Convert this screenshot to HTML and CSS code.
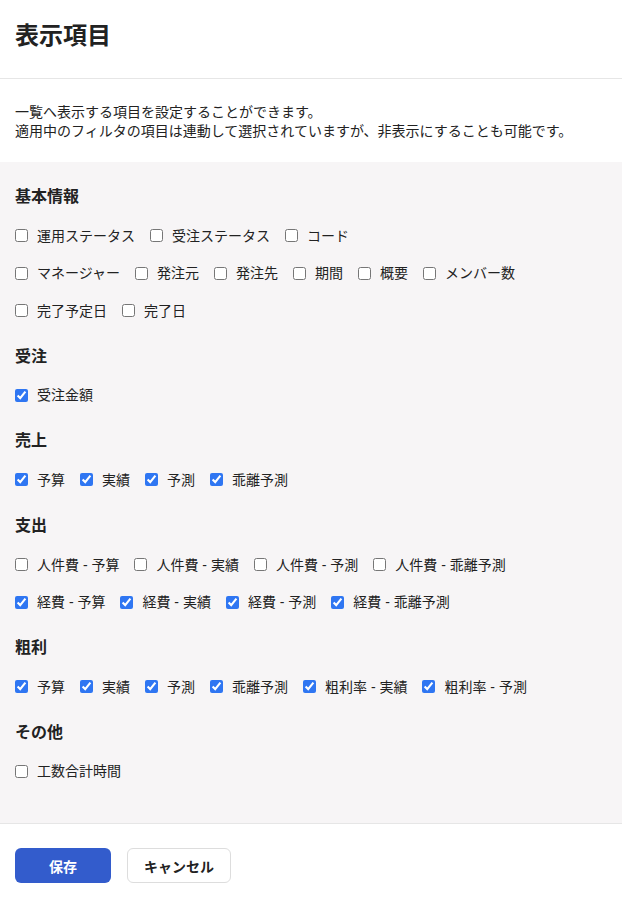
FILE: index.html
```html
<!DOCTYPE html>
<html lang="ja">
<head>
<meta charset="utf-8">
<title>表示項目</title>
<link rel="stylesheet" href="styles.css">
</head>
<body>
<div class="page">
  <header class="header">
    <h1 class="title">表示項目</h1>
  </header>
  <div class="desc">
    <p>一覧へ表示する項目を設定することができます。</p>
    <p>適用中のフィルタの項目は連動して選択されていますが、非表示にすることも可能です。</p>
  </div>
  <main class="body">
    <section class="section">
      <h2 class="heading">基本情報</h2>
      <div class="items">
        <div class="row">
          <label class="item"><input type="checkbox"><span>運用ステータス</span></label>
          <label class="item"><input type="checkbox"><span>受注ステータス</span></label>
          <label class="item"><input type="checkbox"><span>コード</span></label>
        </div>
        <div class="row">
          <label class="item"><input type="checkbox"><span>マネージャー</span></label>
          <label class="item"><input type="checkbox"><span>発注元</span></label>
          <label class="item"><input type="checkbox"><span>発注先</span></label>
          <label class="item"><input type="checkbox"><span>期間</span></label>
          <label class="item"><input type="checkbox"><span>概要</span></label>
          <label class="item"><input type="checkbox"><span>メンバー数</span></label>
        </div>
        <div class="row">
          <label class="item"><input type="checkbox"><span>完了予定日</span></label>
          <label class="item"><input type="checkbox"><span>完了日</span></label>
        </div>
      </div>
    </section>
    <section class="section">
      <h2 class="heading">受注</h2>
      <div class="items">
        <div class="row">
          <label class="item"><input type="checkbox" checked><span>受注金額</span></label>
        </div>
      </div>
    </section>
    <section class="section">
      <h2 class="heading">売上</h2>
      <div class="items">
        <div class="row">
          <label class="item"><input type="checkbox" checked><span>予算</span></label>
          <label class="item"><input type="checkbox" checked><span>実績</span></label>
          <label class="item"><input type="checkbox" checked><span>予測</span></label>
          <label class="item"><input type="checkbox" checked><span>乖離予測</span></label>
        </div>
      </div>
    </section>
    <section class="section">
      <h2 class="heading">支出</h2>
      <div class="items">
        <div class="row">
          <label class="item"><input type="checkbox"><span>人件費 - 予算</span></label>
          <label class="item"><input type="checkbox"><span>人件費 - 実績</span></label>
          <label class="item"><input type="checkbox"><span>人件費 - 予測</span></label>
          <label class="item"><input type="checkbox"><span>人件費 - 乖離予測</span></label>
        </div>
        <div class="row">
          <label class="item"><input type="checkbox" checked><span>経費 - 予算</span></label>
          <label class="item"><input type="checkbox" checked><span>経費 - 実績</span></label>
          <label class="item"><input type="checkbox" checked><span>経費 - 予測</span></label>
          <label class="item"><input type="checkbox" checked><span>経費 - 乖離予測</span></label>
        </div>
      </div>
    </section>
    <section class="section">
      <h2 class="heading">粗利</h2>
      <div class="items">
        <div class="row">
          <label class="item"><input type="checkbox" checked><span>予算</span></label>
          <label class="item"><input type="checkbox" checked><span>実績</span></label>
          <label class="item"><input type="checkbox" checked><span>予測</span></label>
          <label class="item"><input type="checkbox" checked><span>乖離予測</span></label>
          <label class="item"><input type="checkbox" checked><span>粗利率 - 実績</span></label>
          <label class="item"><input type="checkbox" checked><span>粗利率 - 予測</span></label>
        </div>
      </div>
    </section>
    <section class="section">
      <h2 class="heading">その他</h2>
      <div class="items">
        <div class="row">
          <label class="item"><input type="checkbox"><span>工数合計時間</span></label>
        </div>
      </div>
    </section>
  </main>
  <footer class="footer">
    <button class="btn btn-primary" type="button">保存</button>
    <button class="btn btn-secondary" type="button">キャンセル</button>
  </footer>
</div>
</body>
</html>
```

FILE: styles.css
```css
* {
  box-sizing: border-box;
}

html, body {
  margin: 0;
  padding: 0;
  background: #ffffff;
}

body {
  font-family: "Liberation Sans", "Noto Sans CJK JP", sans-serif;
  color: #222222;
  font-size: 14px;
}

.page {
  width: 622px;
  min-height: 899px;
  display: flex;
  flex-direction: column;
}

.header {
  height: 79px;
  padding: 20px 15px 0;
  border-bottom: 1px solid #e6e6e6;
}

.title {
  margin: 0;
  font-size: 24px;
  line-height: 32px;
  font-weight: 700;
  color: #222222;
}

.desc {
  padding: 24px 15px 0;
  height: 83px;
}

.desc p {
  margin: 0;
  font-size: 14px;
  line-height: 19px;
  color: #222222;
}

.body {
  background: #f7f5f6;
  padding: 23px 15px 41px;
  display: flex;
  flex-direction: column;
  gap: 23.2px;
}

.heading {
  margin: 0 0 15.5px;
  font-size: 16px;
  line-height: 24px;
  font-weight: 700;
  color: #222222;
}

.items {
  display: flex;
  flex-direction: column;
  gap: 15.5px;
}

.row {
  display: flex;
  flex-wrap: wrap;
  column-gap: 15px;
}

.item {
  display: flex;
  align-items: center;
  gap: 9px;
  font-size: 14px;
  line-height: 22px;
  color: #222222;
  cursor: pointer;
}

.item input {
  margin: 0;
  width: 13px;
  height: 13px;
  flex: none;
  accent-color: #2f76f2;
}

.footer {
  border-top: 1px solid #e6e6e6;
  padding: 24px 15px 0;
  display: flex;
  gap: 16px;
  flex: 1;
  align-items: flex-start;
}

.btn {
  height: 35px;
  border-radius: 6px;
  font-family: "Liberation Sans", "Noto Sans CJK JP", sans-serif;
  font-size: 14px;
  font-weight: 700;
  cursor: pointer;
  padding: 0;
}

.btn-primary {
  width: 96px;
  background: #335ccc;
  color: #ffffff;
  border: none;
}

.btn-secondary {
  width: 104px;
  background: #ffffff;
  color: #222222;
  border: 1px solid #dddddd;
}
```
